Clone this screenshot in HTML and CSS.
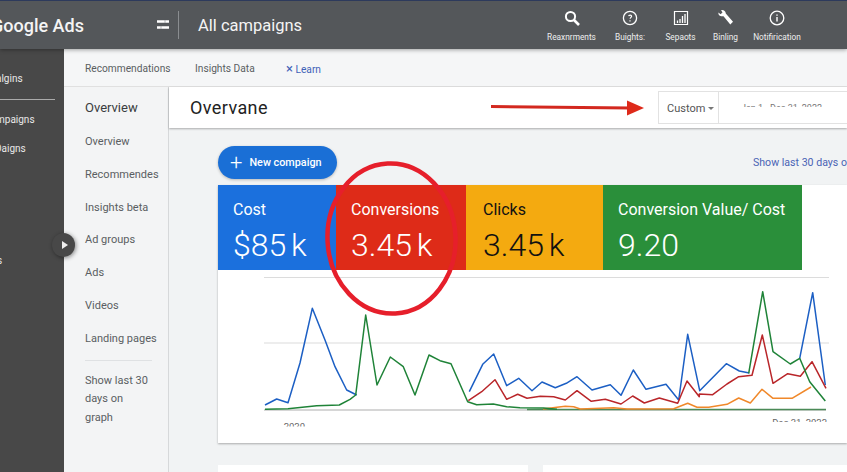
FILE: index.html
```html
<!DOCTYPE html>
<html lang="en">
<head>
<meta charset="utf-8">
<title>Google Ads</title>
<link rel="stylesheet" href="styles.css">
</head>
<body>
<div class="page">
  <header class="topbar">
    <div class="logo">Google Ads</div>
    <svg class="filter-icon" width="14" height="12" viewBox="0 0 14 12"><path d="M1 2.500h12M1 8.500h12" stroke="#fff" stroke-width="2.600" fill="none"/><path d="M9 1v3M5 7v3" stroke="#9a9c9e" stroke-width=".7"/></svg>
    <div class="divider"></div>
    <div class="page-name">All campaigns</div>
    <nav class="tools">
      <div class="tool tool-a"><svg width="18" height="18" viewBox="0 0 18 18"><circle cx="7.500" cy="7.500" r="4.600" fill="none" stroke="#fff" stroke-width="2"/><path d="M11 11l5 5" stroke="#fff" stroke-width="2.600"/></svg><span>Reaxnrments</span></div>
      <div class="tool tool-b"><svg width="18" height="18" viewBox="0 0 18 18"><circle cx="9" cy="9" r="6.600" fill="none" stroke="#fff" stroke-width="1.300"/><path d="M7.600 7.200c.3-1.600 3-1.500 3 0 0 1.100-1.400 1.200-1.500 2.600M9 11.300v1.300" fill="none" stroke="#fff" stroke-width="1.200"/></svg><span>Buights:</span></div>
      <div class="tool tool-c"><svg width="18" height="18" viewBox="0 0 18 18"><path d="M2.500 2.500h13v13h-13z" fill="none" stroke="#fff" stroke-width="1.200"/><path d="M5.500 14v-2.500M8 14v-4M10.500 14V7M13 14V5" stroke="#fff" stroke-width="1.300"/></svg><span>Sepaots</span></div>
      <div class="tool tool-d"><svg width="18" height="18" viewBox="0 0 18 18"><path d="M1.500 3.500l2 1.700 2-1.700-1.400-2.300c2.200-.6 4.600.7 4.700 3.300l7.200 8.300-2.700 2.700-6.800-8.300c-2.900.7-5.600-1-5-3.700z" fill="#fff"/></svg><span>Binling</span></div>
      <div class="tool tool-e"><svg width="18" height="18" viewBox="0 0 18 18"><circle cx="9" cy="9" r="6.800" fill="none" stroke="#fff" stroke-width="1.300"/><path d="M9 8v4.500M9 5.500v1.300" stroke="#fff" stroke-width="1.400"/></svg><span>Notifirication</span></div>
    </nav>
  </header>
  <div class="shell">
    <aside class="rail">
      <div class="rail-item rail-first">algins</div>
      <div class="rail-rule"></div>
      <div class="rail-item rail-second">mpaigns</div>
      <div class="rail-item rail-third">Daigns</div>
      <div class="rail-item rail-last">s</div>
    </aside>
    <main class="main">
      <div class="tabs">
        <span class="tab tab-rec">Recommendations</span>
        <span class="tab tab-ins">Insights Data</span>
        <span class="tab-learn"><span class="x">×</span> Learn</span>
      </div>
      <div class="columns">
        <nav class="subnav">
          <div class="sub sub-head">Overview</div>
          <div class="sub">Overview</div>
          <div class="sub">Recommendes</div>
          <div class="sub">Insights beta</div>
          <div class="sub">Ad groups</div>
          <div class="sub">Ads</div>
          <div class="sub">Videos</div>
          <div class="sub">Landing pages</div>
          <div class="sub-rule"></div>
          <div class="sub-note">Show last 30 days on graph</div>
        </nav>
        <section class="content">
          <div class="titlebar">
            <h1 class="title">Overvane</h1>
            <div class="picker">
              <div class="picker-mode">Custom<span class="caret"></span></div>
              <div class="picker-date"><span class="date-ghost">Jan 1 - Dec 31, 2022</span></div>
            </div>
          </div>
          <div class="body">
            <div class="actions">
              <button class="new-btn"><span class="plus">+</span>New compaign</button>
              <a class="show-link">Show last 30 days on</a>
            </div>
            <div class="card">
              <div class="metrics">
                <div class="metric m-blue"><div class="m-label">Cost</div><div class="m-value">$85 k</div></div>
                <div class="metric m-red"><div class="m-label">Conversions</div><div class="m-value">3.45 k</div></div>
                <div class="metric m-yellow"><div class="m-label">Clicks</div><div class="m-value">3.45 k</div></div>
                <div class="metric m-green"><div class="m-label">Conversion Value/ Cost</div><div class="m-value">9.20</div></div>
              </div>
              <div class="chart">
                <svg width="629" height="173" viewBox="218 270 629 173" class="chart-svg">
                  <path d="M264 277.500H829M264 343H829" stroke="#dcdcdc" stroke-width="1.200" fill="none"/>
                  <path d="M264 410H826" stroke="#c8c8c8" stroke-width="1.600" fill="none"/>
                  <path d="M527 409.500H826" stroke="#4b8a57" stroke-width="1.500" fill="none"/>
                  <g fill="none" stroke-width="1.500" stroke-linejoin="round">
                    <path stroke="#f0882a" d="M543 409 557 407.300 565.300 406.300 573.700 406.700 580.300 409 613.700 407.700 627 409 673.700 408.700 687.700 403.300 697 407.300 708.700 407.300 727 404.300 738.700 398 750.300 403 762 389.300 773 398.300 792 398.300 811 387"/>
                    <path stroke="#1c5fc4" d="M265 405 276.700 399 288 402.700 300 363 312.300 308.300 325 340 335 366.700 346.700 390 356.700 395"/>
                    <path stroke="#1c5fc4" d="M469.300 391.700 482.700 364.300 493.700 354 506.700 385.700 518.700 378.300 532 390.700 542 382 555.300 387.700 566.300 383.300 577 376.700 592 390 610.300 384.700 621 395.300 633.300 370 646 389.300 666 384.300 678.700 400 687.700 334.300 699.700 390.700 726.300 363.700 739.300 371 749.300 373"/>
                    <path stroke="#1c5fc4" d="M799.700 358.300 812.700 292.700 825.300 385"/>
                    <path stroke="#b9262a" d="M468.300 400.700 481.700 391.700 495 379.700 506.700 399.300 517.700 394.300 527 398.300 540.300 396.300 553.700 396.700 565.300 400 577 390.700 591.300 401.300 605.300 399.300 621 404 632.700 396 644.300 403 659.300 398 677.700 403.300 687 381 699.300 396.700 699.300 394 712.700 394.700 727 384 738.700 376.700 752 375.300 762.300 335 773 383.300 787.700 373.700 800.300 376.300 812 361.700 826 388.300"/>
                    <path stroke="#1f8338" d="M265 409.300 288 408.700 316.700 405.700 339.300 405 350 399.300 355.700 395 365.700 315 377 385 390.300 357 403.300 366.700 415 395 429 355 440 360.700 451 363.700 467.700 401.700 476.700 404.700 493.300 404 506.700 406.700 520 407.700 543.700 408 557 409.300"/>
                    <path stroke="#1f8338" d="M748.700 373.300 762.700 291.700 773 351.700 790.300 364 799.700 358.300 809.700 381.700 825.300 401"/>
                  </g>
                  <text class="axis-label" x="305" y="430" text-anchor="end">2020</text>
                  <text class="axis-label" x="827" y="426" text-anchor="end">Dec 31, 2022</text>
                  <rect x="260" y="426.500" width="60" height="8" fill="#fff"/>
                  <rect x="760" y="422" width="80" height="8" fill="#fff"/>
                </svg>
              </div>
            </div>
            <div class="lower">
              <div class="lower-card lower-left"></div>
              <div class="lower-card lower-right"></div>
            </div>
          </div>
        </section>
      </div>
    </main>
  </div>
  <button class="rail-toggle" aria-label="Expand"><span class="tri"></span></button>
  <svg class="annotations" width="847" height="472" viewBox="0 0 847 472">
    <ellipse cx="391.500" cy="238.500" rx="64" ry="75" transform="rotate(-3 391.500 238.500)" fill="none" stroke="#e61f2b" stroke-width="4.500"/>
    <path d="M491 106.500 630 108" stroke="#d3281f" stroke-width="3" fill="none"/>
    <path d="M627 100.500 644 108 627 115.500z" fill="#de2a1a"/>
  </svg>
</div>
</body>
</html>
```
FILE: styles.css
```css
* { box-sizing: border-box; }
html, body { margin: 0; padding: 0; }
body { font-family: Roboto, "Liberation Sans", sans-serif; color: #3c4043; background: #f1f3f4; }
.page { position: relative; width: 847px; height: 472px; overflow: hidden; display: flex; flex-direction: column; }

.topbar { height: 49px; flex: none; display: flex; align-items: center; background: #54575a; border-top: 1px solid #2d3a5c; color: #fff; position: relative; z-index: 3; box-shadow: 0 1px 4px rgba(0,0,0,.35); }
.logo { font-size: 18px; font-weight: 500; margin-left: -9px; width: 165px; flex: none; color: #f4f4f4; }
.filter-icon { flex: none; margin-right: 8px; }
.divider { width: 1px; height: 28px; background: #8a8d90; flex: none; }
.page-name { font-size: 16.500px; margin-left: 19px; color: #f4f4f4; flex: 1; }
.tools { display: flex; flex: none; margin-right: 46px; }
.tool { display: flex; flex-direction: column; align-items: center; font-size: 8.300px; color: #eee; gap: 5px; padding-top: 1px; white-space: nowrap; }
.tool-a { width: 58px; }
.tool-b { width: 30px; margin-left: 14.500px; }
.tool-c { width: 30px; margin-left: 20.500px; }
.tool-d { width: 26px; margin-left: 17px; }
.tool-e { width: 48px; margin-left: 14.500px; }

.shell { flex: 1; display: flex; min-height: 0; }
.rail { width: 64px; flex: none; background: #484848; color: #e8e8e8; font-size: 10px; overflow: hidden; }
.rail-item { height: 14px; line-height: 14px; }
.rail-first { margin: 23px 0 0 -4px; }
.rail-rule { height: 1px; background: #aaa; margin: 13px 9px 0 0; }
.rail-second { margin: 13px 0 0 -4px; }
.rail-third { margin: 15px 0 0 -5px; }
.rail-last { margin-top: 98px; margin-left: -3px; }

.main { flex: 1; display: flex; flex-direction: column; min-width: 0; }
.tabs { height: 38px; flex: none; display: flex; align-items: center; padding-top: 2px; border-bottom: 1px solid #e0e0e0; font-size: 10.200px; color: #5a5e62; background: #f5f6f7; }
.tab-rec { margin-left: 21px; width: 110px; }
.tab-ins { width: 91px; }
.tab-learn { color: #3f62b8; }
.x { color: #3f62b8; font-size: 13px; }

.columns { flex: 1; display: flex; min-height: 0; }
.subnav { width: 105px; flex: none; background: #f3f4f5; border-right: 1px solid #d6d8da; padding: 14px 0 0 21px; font-size: 11px; color: #5a5e62; }
.sub { height: 32.800px; line-height: 14px; }
.sub-head { font-size: 13px; color: #3a3d40; height: 34px; }
.sub-rule { height: 1px; width: 67px; background: #dfe1e3; margin-top: -5px; }
.sub-note { width: 66px; line-height: 18.500px; margin-top: 11px; }

.content { flex: 1; min-width: 0; display: flex; flex-direction: column; }
.titlebar { height: 41px; flex: none; background: #fff; display: flex; align-items: center; justify-content: space-between; box-shadow: 0 1px 2px rgba(0,0,0,.3); position: relative; z-index: 1; padding: 0 0 0 21px; }
.title { margin: 0; font-size: 18px; font-weight: 400; color: #222; letter-spacing: .4px; }
.picker { display: flex; height: 33px; width: 189px; border: 1px solid #e2e2e2; border-right: 0; font-size: 11px; }
.picker-mode { width: 60px; display: flex; align-items: center; padding: 1px 0 0 8px; gap: 3px; border-right: 1px solid #e2e2e2; color: #555; }
.caret { width: 0; height: 0; border: 3px solid transparent; border-top: 3px solid #777; margin-top: 3px; }
.picker-date { flex: 1; overflow: hidden; position: relative; }
.date-ghost { display: block; height: 3px; margin: 12px 0 0 22px; overflow: hidden; font-size: 9px; line-height: 8px; color: #777; white-space: nowrap; }

.body { flex: 1; background: #f1f3f4; padding: 18px 0 0 49px; min-height: 0; }
.actions { display: flex; justify-content: space-between; align-items: center; height: 33px; margin-bottom: 6px; }
.new-btn { width: 119px; height: 33px; border: 0; border-radius: 17px; background: #1a6fd6; color: #fff; font: 500 10.800px Roboto, "Liberation Sans", sans-serif; display: flex; align-items: center; padding: 0 0 0 12px; box-shadow: 0 1px 3px rgba(0,0,0,.25); }
.plus { font-size: 22px; font-weight: 300; margin-right: 7px; line-height: 20px; }
.show-link { font-size: 10.600px; color: #4a63b4; white-space: nowrap; width: 94px; overflow: hidden; flex: none; }

.card { background: #fff; height: 258px; box-shadow: 0 1px 2px rgba(0,0,0,.3); }
.metrics { display: flex; height: 85px; }
.metric { padding: 16px 0 0 15px; flex: none; }
.m-label { font-size: 16px; line-height: 18px; }
.m-value { font-size: 32px; font-weight: 350; line-height: 36px; margin-top: 8px; word-spacing: -3px; }
.m-blue { width: 118px; background: #1b70dd; color: #fff; }
.m-red { width: 130px; background: #de2b18; color: #fff; }
.m-yellow { width: 137px; background: #f4aa10; color: #111; padding-left: 17px; }
.m-green { width: 199px; background: #2a8f3a; color: #fff; }
.chart-svg { display: block; }
.axis-label { font-size: 9.500px; fill: #666; font-family: Roboto, "Liberation Sans", sans-serif; }

.lower { display: flex; gap: 15px; margin-top: 22px; }
.lower-card { height: 40px; background: #fff; }
.lower-left { width: 310px; }
.lower-right { flex: 1; }

.rail-toggle { position: absolute; left: 52px; top: 233px; width: 23px; height: 24px; border: 0; border-radius: 50%; background: #484848; box-shadow: 1px 1px 4px rgba(0,0,0,.45); z-index: 4; padding: 0; display: flex; align-items: center; justify-content: center; }
.tri { width: 0; height: 0; border-left: 6px solid #eee; border-top: 4px solid transparent; border-bottom: 4px solid transparent; margin-left: 2px; }
.annotations { position: absolute; left: 0; top: 0; z-index: 5; pointer-events: none; }
```
